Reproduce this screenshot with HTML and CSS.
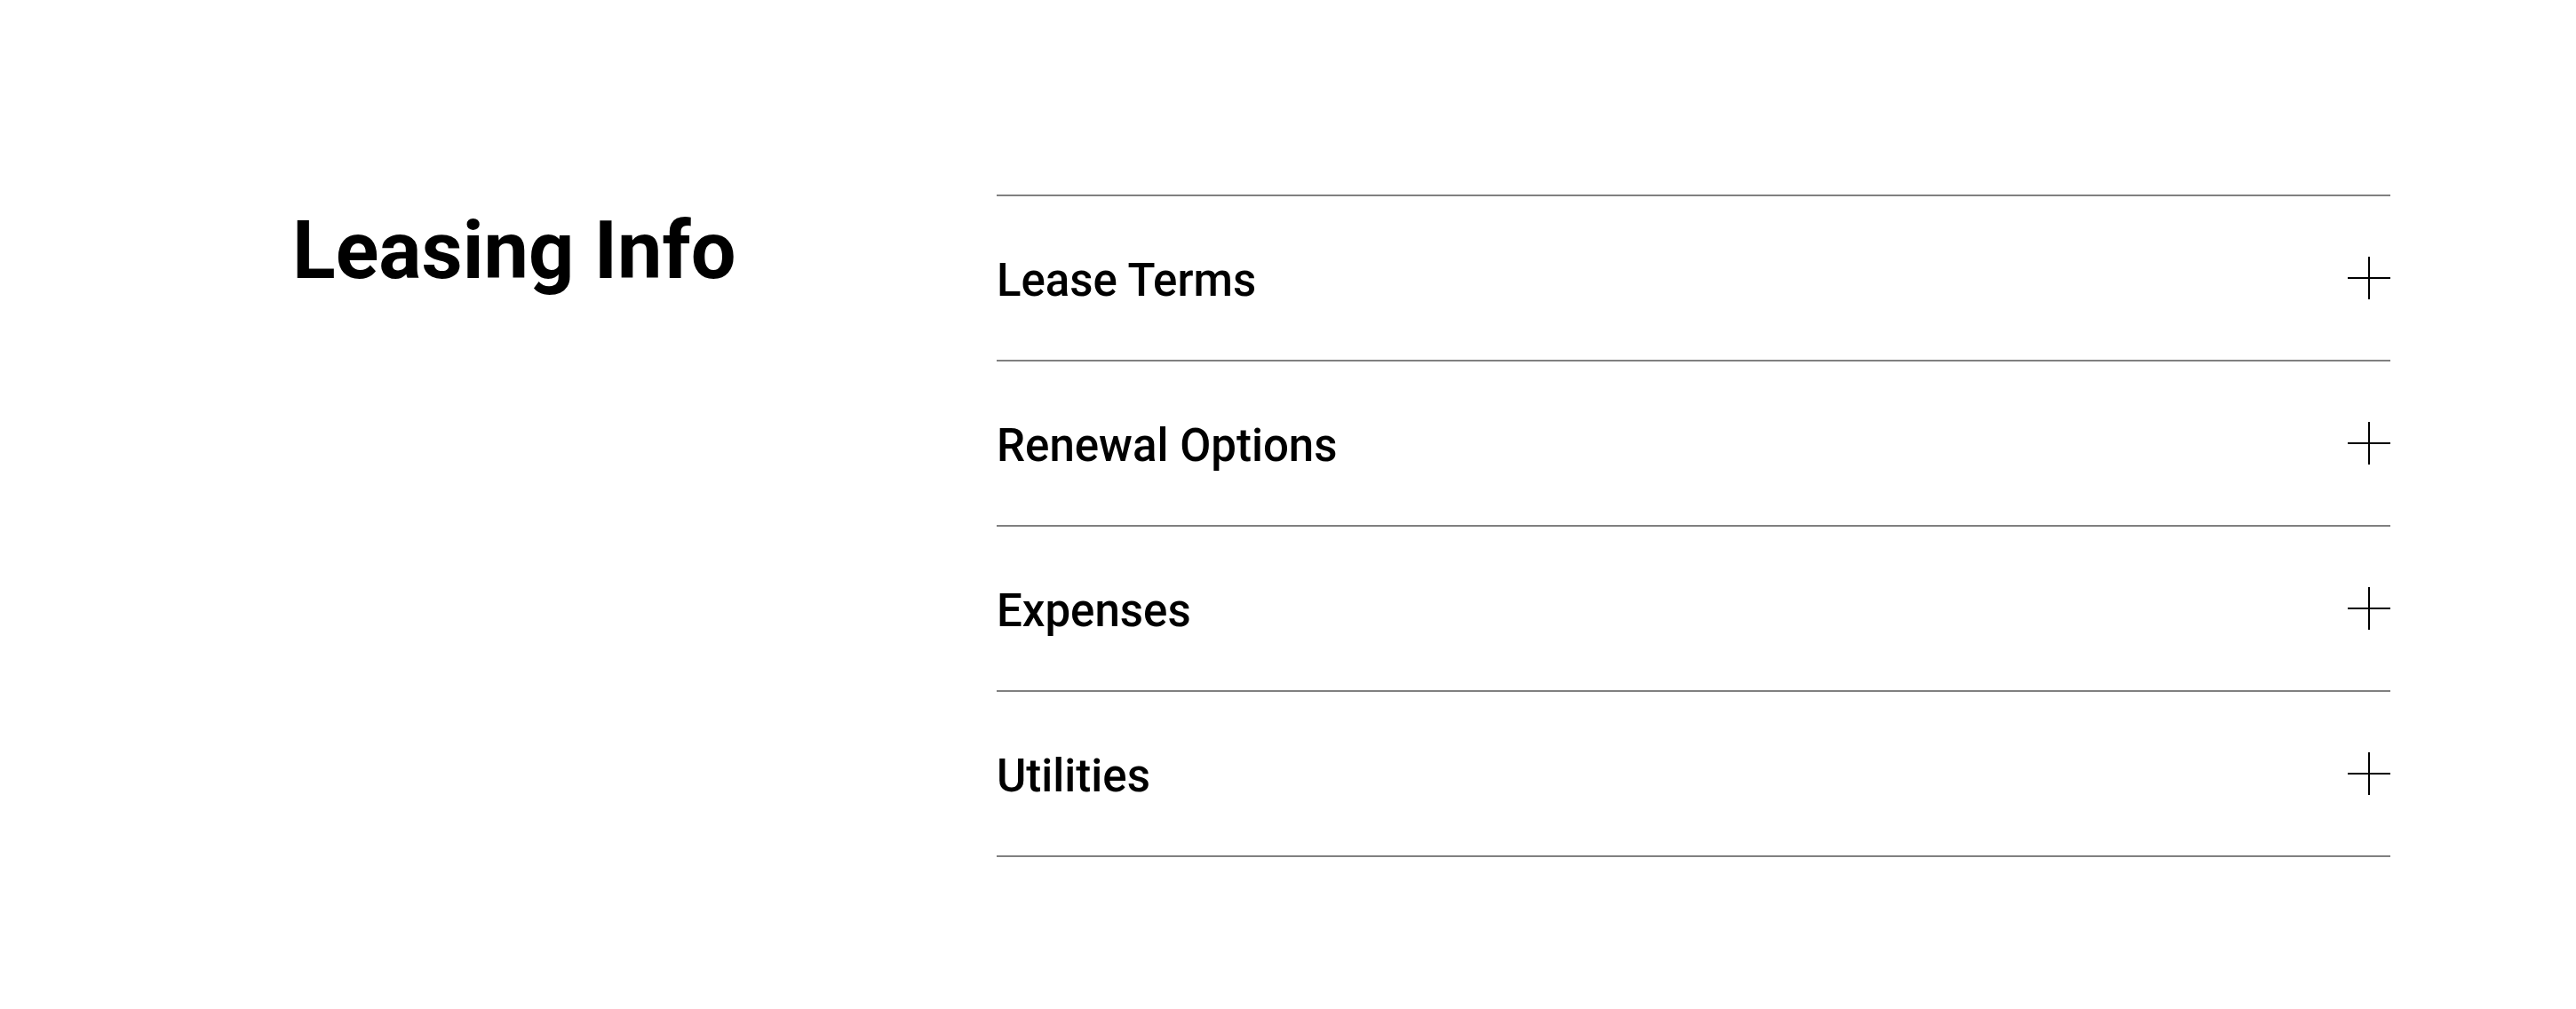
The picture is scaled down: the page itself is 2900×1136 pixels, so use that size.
FILE: index.html
```html
<!DOCTYPE html>
<html lang="en">
<head>
<meta charset="utf-8">
<title>Leasing Info</title>
<link rel="stylesheet" href="styles.css">
</head>
<body>
<section class="leasing">
  <h2 class="leasing-title">Leasing Info</h2>
  <div class="accordion">
    <div class="acc-item">
      <span class="acc-label">Lease Terms</span>
      <svg class="acc-icon" viewBox="0 0 48 48" width="48" height="48"><path d="M24 0V48M0 24H48" stroke="#000" stroke-width="2" fill="none"/></svg>
    </div>
    <div class="acc-item">
      <span class="acc-label">Renewal Options</span>
      <svg class="acc-icon" viewBox="0 0 48 48" width="48" height="48"><path d="M24 0V48M0 24H48" stroke="#000" stroke-width="2" fill="none"/></svg>
    </div>
    <div class="acc-item">
      <span class="acc-label">Expenses</span>
      <svg class="acc-icon" viewBox="0 0 48 48" width="48" height="48"><path d="M24 0V48M0 24H48" stroke="#000" stroke-width="2" fill="none"/></svg>
    </div>
    <div class="acc-item">
      <span class="acc-label">Utilities</span>
      <svg class="acc-icon" viewBox="0 0 48 48" width="48" height="48"><path d="M24 0V48M0 24H48" stroke="#000" stroke-width="2" fill="none"/></svg>
    </div>
  </div>
</section>
</body>
</html>
```

FILE: styles.css
```css
html, body {
  margin: 0;
  padding: 0;
  background: #fff;
}
body {
  font-family: Roboto, "Liberation Sans", Arial, sans-serif;
  color: #000;
}
.leasing {
  display: flex;
  align-items: flex-start;
  padding: 219px 209px 0 329px;
}
.leasing-title {
  flex: 0 0 793px;
  margin: 19px 0 0 0;
  font-size: 90px;
  line-height: 1;
  font-weight: 700;
  letter-spacing: 0;
}
.accordion {
  flex: 1 1 auto;
  border-top: 2px solid #808080;
}
.acc-item {
  display: flex;
  align-items: center;
  justify-content: space-between;
  height: 184px;
  border-bottom: 2px solid #808080;
}
.acc-label {
  font-size: 51px;
  line-height: 1;
  font-weight: 500;
  padding-top: 5px;
}
.acc-icon {
  display: block;
  flex: 0 0 48px;
}
```
